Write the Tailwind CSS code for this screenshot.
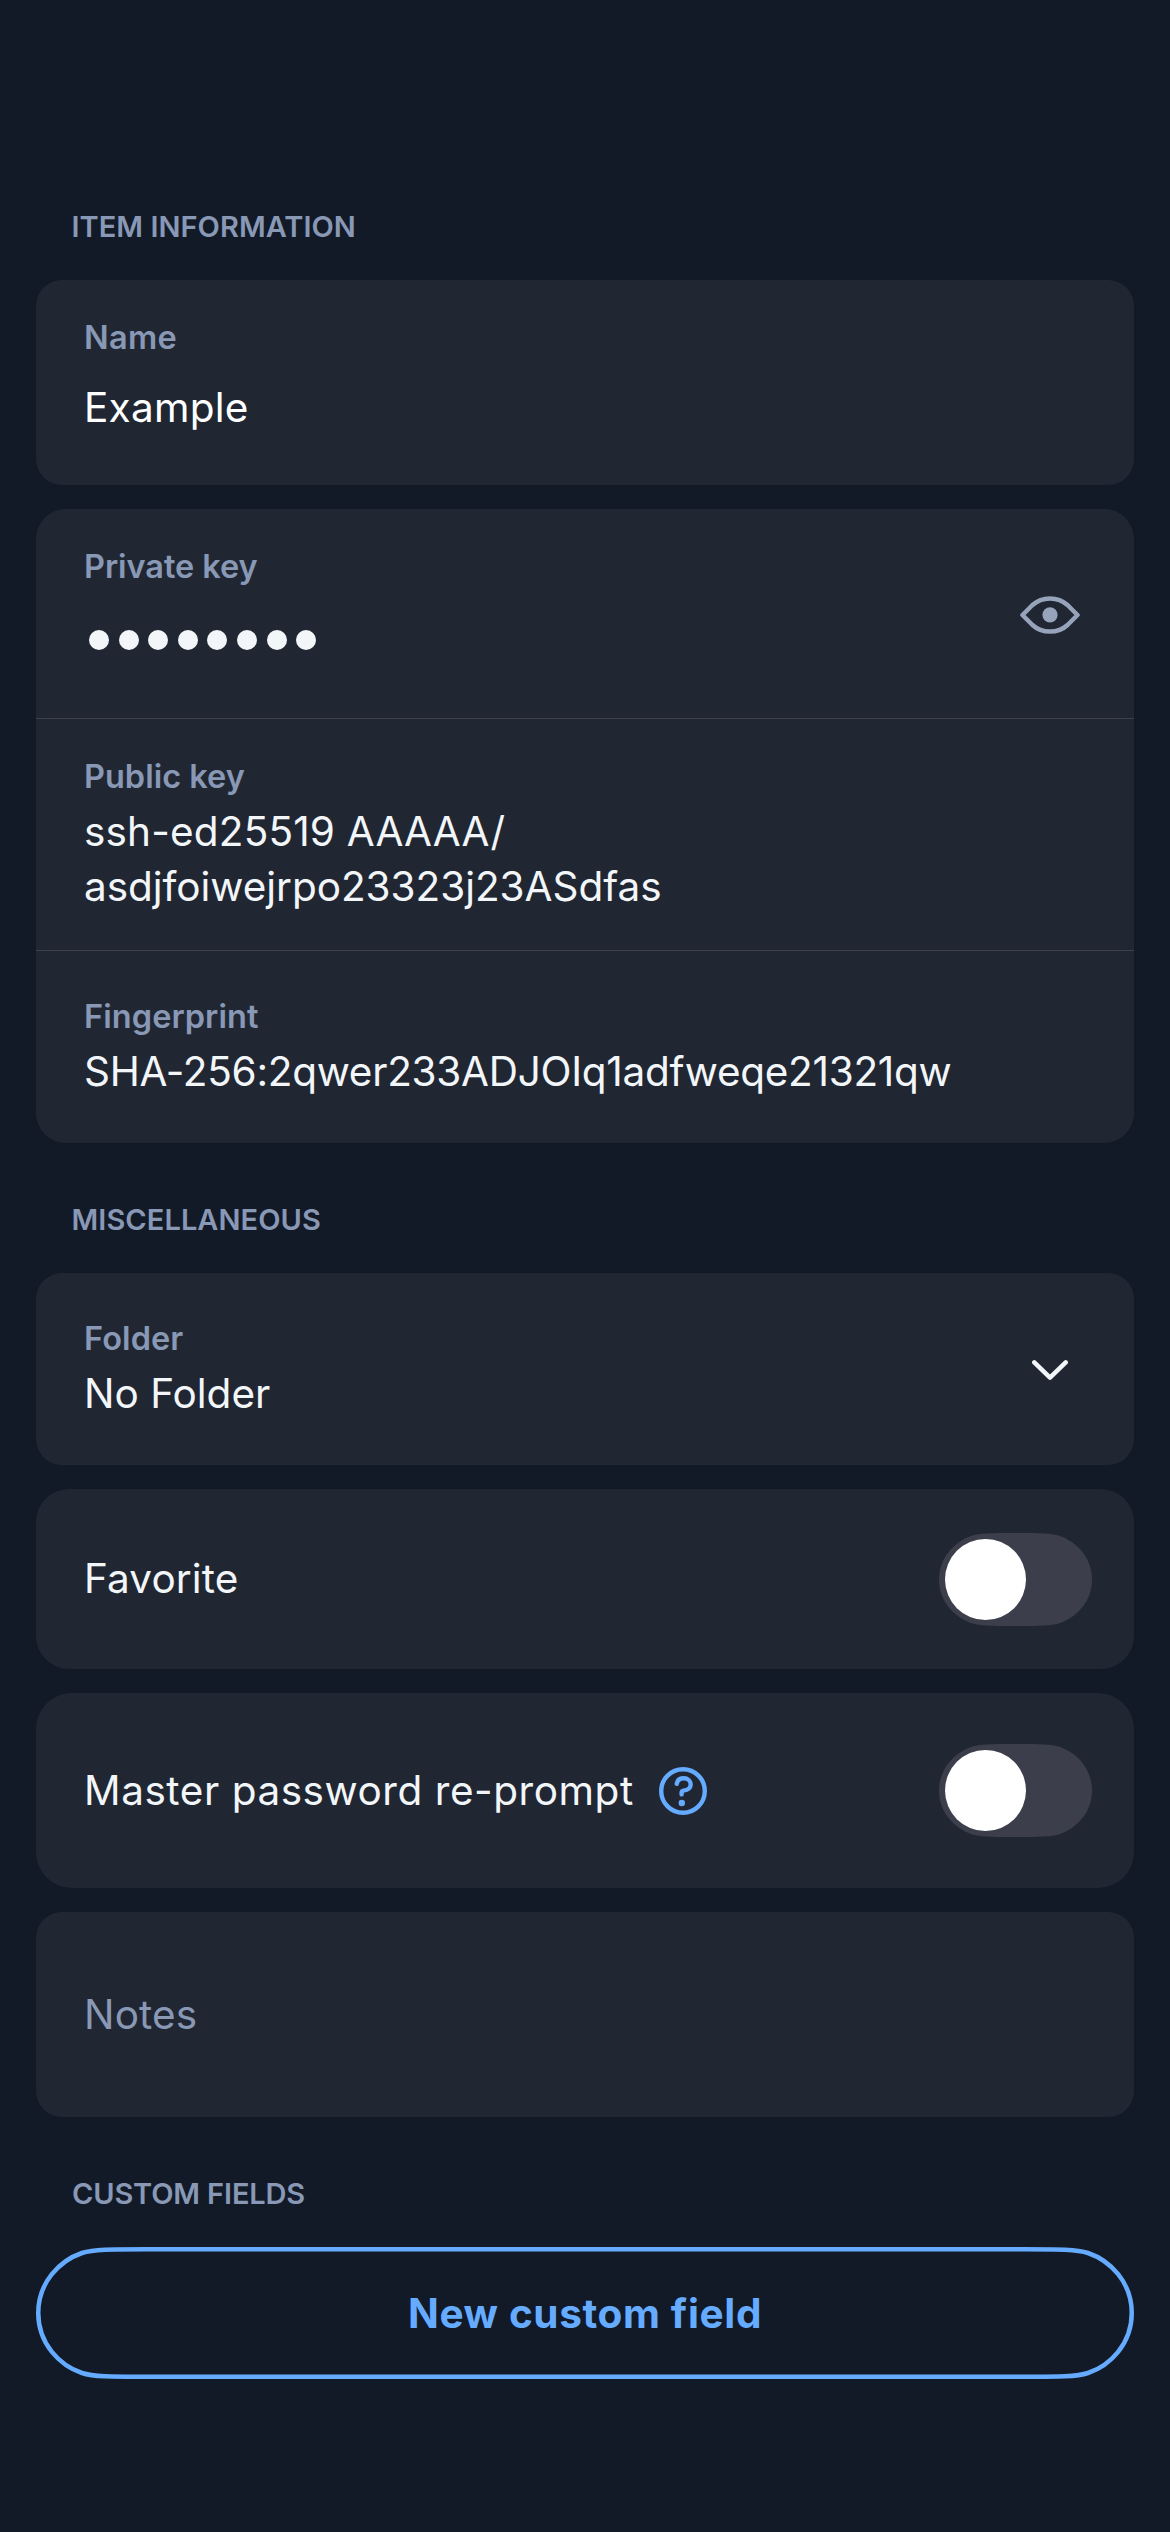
<!DOCTYPE html>
<html lang="en">
<head>
<meta charset="utf-8">
<title>Edit item</title>
<script src="https://cdn.jsdelivr.net/npm/@tailwindcss/browser@4"></script>
</head>
<body class="w-[1170px] h-[2532px] overflow-hidden bg-[#121a27] font-['Inter',sans-serif] text-[40.5px] leading-[55px] text-[#f3f6f9]">
<svg class="hidden">
  <symbol id="switch-track" viewBox="0 0 153 93">
    <path d="M75 0H78C100 0 112 .2 121 3C138 9 153 25 153 46.500C153 68 138 84 121 90C112 92.800 100 93 78 93H75C53 93 41 92.800 32 90C15 84 0 68 0 46.500C0 25 15 9 32 3C41 .2 53 0 75 0Z"/>
  </symbol>
</svg>
<main class="flex flex-col px-9 pt-[205px]">
  <h2 class="mb-8 pl-[35.5px] text-[29px] leading-[43px] font-semibold tracking-[0.03px] text-[#8898b5]">ITEM INFORMATION</h2>

  <section class="h-[205px] rounded-[26px] bg-[#202733] px-12 pt-[38px]">
    <div class="text-[32.5px] leading-10 font-semibold tracking-[0.3px] text-[#8898b5]">Name</div>
    <div class="mt-[22px] tracking-[0.25px] text-white">Example</div>
  </section>

  <section class="mt-6 flex h-[634px] flex-col overflow-hidden rounded-[30px] bg-[#202733]">
    <div class="flex h-[210px] justify-between border-b border-[#3c414c] pl-12 pr-[54px]">
      <div class="pt-[38px]">
        <div class="text-[32.5px] leading-10 font-semibold tracking-[-0.05px] text-[#8898b5]">Private key</div>
        <div class="mt-[43px] ml-[5px] flex gap-[9.6px]" role="img" aria-label="Hidden value">
          <i class="size-5 rounded-full bg-[#f3f6f9]"></i><i class="size-5 rounded-full bg-[#f3f6f9]"></i><i class="size-5 rounded-full bg-[#f3f6f9]"></i><i class="size-5 rounded-full bg-[#f3f6f9]"></i><i class="size-5 rounded-full bg-[#f3f6f9]"></i><i class="size-5 rounded-full bg-[#f3f6f9]"></i><i class="size-5 rounded-full bg-[#f3f6f9]"></i><i class="size-5 rounded-full bg-[#f3f6f9]"></i>
        </div>
      </div>
      <svg class="mt-[87px] h-[38px] w-[60px]" viewBox="0 0 60 38" fill="none" stroke="#96a3bb" stroke-width="4.5" stroke-linejoin="round">
        <path d="M2.500 19L12.500 9C17.300 4.600 23 2.400 30 2.400S42.700 4.600 47.500 9L57.500 19L47.500 29C42.700 33.400 37 35.600 30 35.600S17.300 33.400 12.500 29Z"/>
        <circle cx="30" cy="18.8" r="7.6" fill="#96a3bb" stroke="none"/>
      </svg>
    </div>
    <div class="h-[232px] border-b border-[#3c414c] px-12 pt-[38px]">
      <div class="text-[32.5px] leading-10 font-semibold text-[#8898b5]">Public key</div>
      <div class="mt-[7px]"><span class="tracking-[0.17px]">ssh-ed25519 AAAAA/</span><br><span class="tracking-[-0.04px]">asdjfoiwejrpo23323j23ASdfas</span></div>
    </div>
    <div class="px-12 pt-[46px]">
      <div class="text-[32.5px] leading-10 font-semibold tracking-[0.08px] text-[#8898b5]">Fingerprint</div>
      <div class="mt-[7px] tracking-[-0.28px]">SHA-256:2qwer233ADJOIq1adfweqe21321qw</div>
    </div>
  </section>

  <h2 class="mt-[55px] mb-8 pl-[35.5px] text-[29px] leading-[43px] font-semibold tracking-[0.07px] text-[#8898b5]">MISCELLANEOUS</h2>

  <section class="flex h-48 justify-between rounded-[26px] bg-[#202733] pl-12 pr-[66px]">
    <div class="pt-[46px]">
      <div class="text-[32.5px] leading-10 font-semibold tracking-[0.1px] text-[#8898b5]">Folder</div>
      <div class="mt-[7px]">No Folder</div>
    </div>
    <svg class="mt-[87px] h-5 w-9" viewBox="0 0 36 20" fill="none" stroke="#f3f6f9" stroke-width="4.5" stroke-linecap="round" stroke-linejoin="round"><path d="M2.3 2.4L18 17.6L33.7 2.4"/></svg>
  </section>

  <section class="mt-6 flex h-[180px] items-start justify-between rounded-[33px] bg-[#202733] pl-12 pr-[42px]">
    <div class="mt-[62px] tracking-[0.13px]">Favorite</div>
    <svg class="mt-11 h-[93px] w-[153px] fill-[#3c3f4b]"><use href="#switch-track"/><circle cx="46.5" cy="46.5" r="40.5" fill="#fff"/></svg>
  </section>

  <section class="mt-6 flex h-[195px] items-center rounded-[36px] bg-[#202733] pl-12 pr-[42px]">
    <div class="w-[575px] tracking-[0.55px] whitespace-nowrap">Master password re-prompt</div>
    <svg class="size-12" viewBox="0 0 48 48" fill="none" stroke="#65abff" stroke-width="4.4" stroke-linecap="round">
      <circle cx="24" cy="24" r="21.8"/>
      <path d="M17.7 16.9C18.2 13.2 21 11.2 24.7 11.2C28.8 11.2 31.7 14 31.7 17.3C31.7 21 28.5 23.2 25.6 23.4C23.5 23.6 22.6 24.3 22.6 25.6V27.4"/>
      <circle cx="22.8" cy="36" r="3.2" fill="#65abff" stroke="none"/>
    </svg>
    <svg class="ml-auto h-[93px] w-[153px] fill-[#3c3f4b]"><use href="#switch-track"/><circle cx="46.5" cy="46.5" r="40.5" fill="#fff"/></svg>
  </section>

  <section class="mt-6 flex h-[205px] items-center rounded-[26px] bg-[#202733] px-12 tracking-[0.13px] text-[#8898b5]">Notes</section>

  <h2 class="mt-[55px] mb-8 pl-9 text-[29px] leading-[43px] font-semibold tracking-[-0.15px] text-[#8898b5]">CUSTOM FIELDS</h2>

  <button class="relative flex h-[132px] items-start justify-center pt-[39px] font-bold tracking-[0.63px] text-[#65abff]">
    <svg class="absolute inset-0 h-[132px] w-[1098px]" viewBox="0 0 1098 132" fill="none" stroke="#65abff" stroke-width="4.5">
      <path d="M110 2.250H988C1023 2.250 1041 2.300 1052 6C1074 13.500 1095.750 35 1095.750 66C1095.750 97 1074 118.500 1052 126C1041 129.700 1023 129.750 988 129.750H110C75 129.750 57 129.700 46 126C24 118.500 2.250 97 2.250 66C2.250 35 24 13.500 46 6C57 2.300 75 2.250 110 2.250Z"/>
    </svg>
    New custom field
  </button>
</main>
</body>
</html>
